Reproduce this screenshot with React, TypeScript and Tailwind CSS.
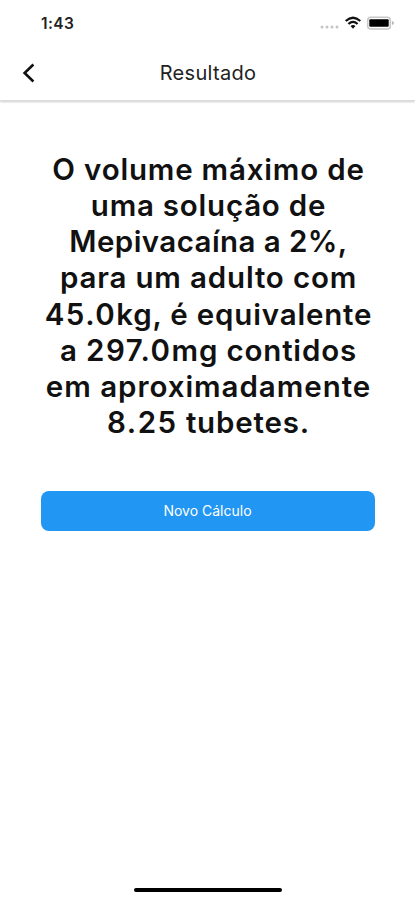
const lines = [
  { text: "O volume máximo de", spacing: "tracking-[0.8px]" },
  { text: "uma solução de", spacing: "tracking-[0.77px]" },
  { text: "Mepivacaína a 2%,", spacing: "tracking-[0.42px]" },
  { text: "para um adulto com", spacing: "tracking-[0.83px]" },
  { text: "45.0kg, é equivalente", spacing: "tracking-[0.82px]" },
  { text: "a 297.0mg contidos", spacing: "tracking-[0.82px]" },
  { text: "em aproximadamente", spacing: "tracking-[0.95px]" },
  { text: "8.25 tubetes.", spacing: "tracking-[0.82px]" },
];

function Line({ text, spacing }: { text: string; spacing: string }) {
  return (
    <span className={`block whitespace-nowrap ${spacing}`}>
      {text.split(/(\d+\.\d+)/).map((part, i) =>
        i % 2 ? <span key={i} className="tracking-[1.5px]">{part}</span> : part,
      )}
    </span>
  );
}

export default function App() {
  return (
    <div className="flex h-[900px] w-[415px] flex-col overflow-hidden bg-white font-['Inter',sans-serif] text-[#111]">
      <header className="h-[101px] shrink-0 border-b border-[#dcdcdc] shadow-[0_1px_2px_rgba(0,0,0,0.2)]">
        <div className="flex h-[46px] items-center justify-between pr-[20px] pl-[41px]">
          <span className="pt-px text-[15.5px] font-semibold tracking-[0.4px] text-[#222]">1:43</span>
          <svg width="76" height="20" viewBox="0 0 76 20" fill="none">
            <g fill="#c4c4c4">
              <circle cx="3" cy="14" r="1.5" />
              <circle cx="8" cy="14" r="1.5" />
              <circle cx="13" cy="14" r="1.5" />
              <circle cx="18" cy="14" r="1.5" />
            </g>
            <path d="M26.7 8Q34 1.5 41.3 8M29.4 11Q34 6.8 38.6 11" stroke="#111" strokeWidth="2.2" />
            <path d="M31.5 13Q34 11 36.5 13L34 15.8Z" fill="#111" />
            <rect x="48.7" y="4.2" width="22.6" height="11.8" rx="3" stroke="#c8c8c8" strokeWidth="1.6" />
            <rect x="50.3" y="6.2" width="19.4" height="7.6" rx="1" fill="#000" />
            <path d="M73 8v4q2-.5 2-2t-2-2" fill="#b8b8b8" />
          </svg>
        </div>
        <div className="grid h-[54px] grid-cols-[52px_1fr_52px] items-center">
          <svg className="ml-[20px]" width="18" height="22" viewBox="0 0 18 22" fill="none">
            <path d="M13.4 2.5L4.6 11L13.4 19.5" stroke="#111" strokeWidth="2.6" />
          </svg>
          <h1 className="pb-px pl-px text-center text-[20px] tracking-[0.3px] text-[#222]">Resultado</h1>
        </div>
      </header>
      <main className="flex flex-col pt-[50px] pr-[40px] pl-[41px]">
        <p className="pl-px text-center text-[29.5px] leading-[36.15px] font-semibold">
          {lines.map((line) => (
            <Line key={line.text} {...line} />
          ))}
        </p>
        <button className="mt-[51px] h-[40px] rounded-[8px] bg-[#2196f3] pr-px pb-[2px] text-[14px] text-white">Novo Cálculo</button>
      </main>
      <div className="mt-auto mb-[8px] h-[4px] w-[148px] self-center rounded-full bg-black" />
    </div>
  );
}
